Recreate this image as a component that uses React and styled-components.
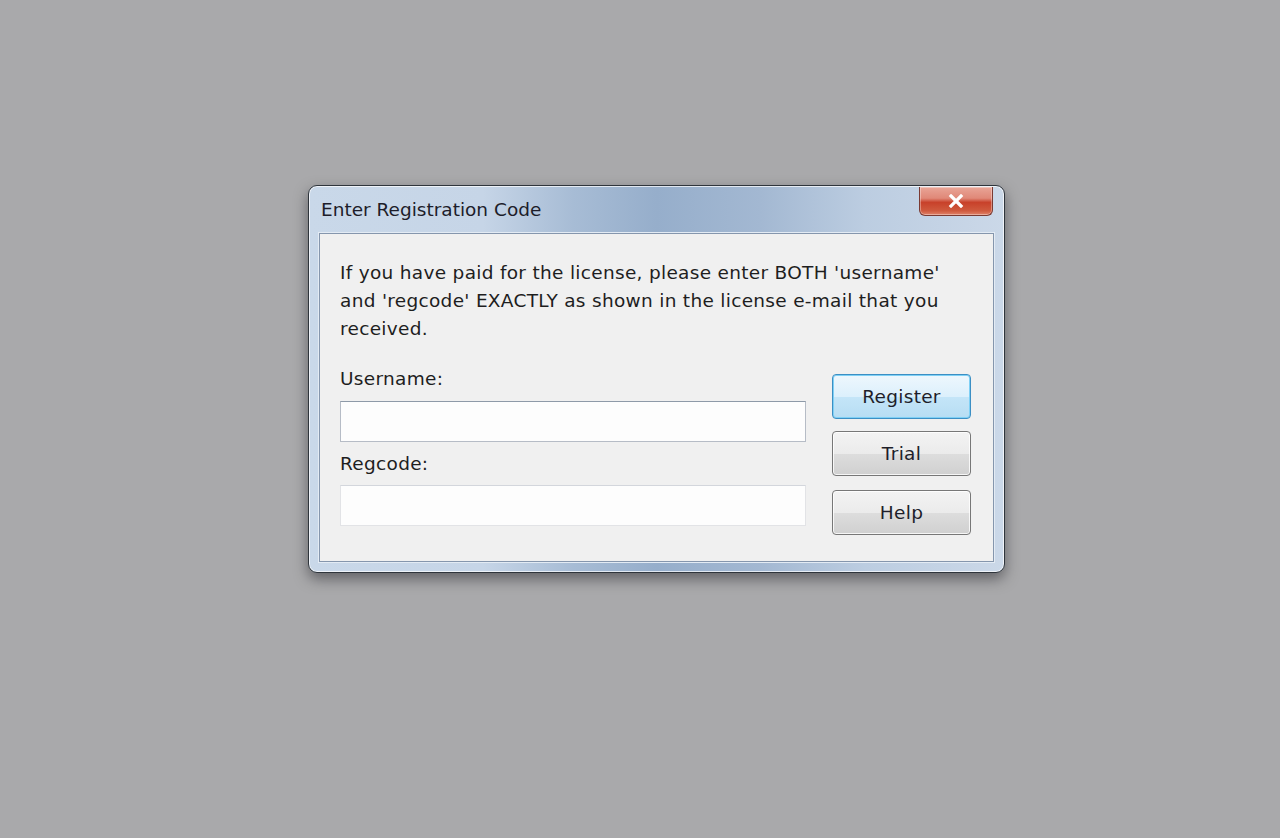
import React from "react";
import styled, { createGlobalStyle } from "styled-components";

const GlobalStyle = createGlobalStyle`
  html, body {
    margin: 0;
    padding: 0;
    background: #a9a9ab;
  }
  body {
    font-family: "DejaVu Sans", "Noto Sans", sans-serif;
  }
`;

const App = () => {
  return (
    <>
      <GlobalStyle />
      <DesktopStyled>
        <WindowStyled>
          <TitleBarStyled>
            <TitleStyled>Enter Registration Code</TitleStyled>
            <CloseStyled aria-label="Close">
              <svg width="16" height="14" viewBox="0 0 16 14">
                <path
                  d="M3 2 L13 12 M13 2 L3 12"
                  stroke="#fff"
                  strokeWidth="3.2"
                  strokeLinecap="square"
                />
              </svg>
            </CloseStyled>
          </TitleBarStyled>
          <ClientStyled>
            <MessageStyled>
              If you have paid for the license, please enter BOTH 'username'
              and 'regcode' EXACTLY as shown in the license e-mail that you
              received.
            </MessageStyled>
            <FormRowStyled>
              <FieldsStyled>
                <LabelStyled>Username:</LabelStyled>
                <InputStyled type="text" />
                <LabelStyled $second>Regcode:</LabelStyled>
                <InputStyled type="text" $light />
              </FieldsStyled>
              <ButtonsStyled>
                <ButtonStyled $default>Register</ButtonStyled>
                <ButtonStyled>Trial</ButtonStyled>
                <ButtonStyled $gap>Help</ButtonStyled>
              </ButtonsStyled>
            </FormRowStyled>
          </ClientStyled>
        </WindowStyled>
      </DesktopStyled>
    </>
  );
};

// Styled components
const DesktopStyled = styled.div`
  width: 1280px;
  height: 838px;
  padding: 185px 0 0 308px;
  box-sizing: border-box;
  overflow: hidden;
`;

const WindowStyled = styled.div`
  width: 697px;
  height: 388px;
  box-sizing: border-box;
  border: 1px solid #2f353c;
  border-radius: 9px;
  padding: 0 10px 10px 10px;
  background: linear-gradient(
    90deg,
    #c9d8e9 0%,
    #c6d5e7 25%,
    #a7bcd5 38%,
    #96aecb 50%,
    #a3b8d2 65%,
    #bccde1 80%,
    #cbd8e8 100%
  );
  box-shadow: 0 6px 14px rgba(40, 40, 45, 0.55),
    inset 0 0 0 1px rgba(255, 255, 255, 0.7);
  display: flex;
  flex-direction: column;
`;

const TitleBarStyled = styled.div`
  height: 47px;
  display: flex;
  align-items: flex-start;
  justify-content: space-between;
  padding-left: 2px;
`;

const TitleStyled = styled.div`
  margin-top: 13px;
  font-size: 18.5px;
  color: #1d1d2a;
`;

const CloseStyled = styled.div`
  width: 74px;
  height: 29px;
  margin-top: 1px;
  margin-right: 1px;
  box-sizing: border-box;
  border: 1px solid #7a3a32;
  border-top: none;
  border-radius: 0 0 6px 6px;
  background: linear-gradient(
    180deg,
    #e9a597 0%,
    #e08878 40%,
    #c8412a 55%,
    #cf5a3e 85%,
    #e0836a 100%
  );
  box-shadow: inset 0 0 0 1px rgba(255, 255, 255, 0.35);
  display: flex;
  align-items: center;
  justify-content: center;
`;

const ClientStyled = styled.div`
  flex: 1;
  background: #f0f0f0;
  border: 1px solid #8596ad;
  box-shadow: 0 0 0 1px #e3ebf4;
  padding: 25px 20px 0 20px;
  color: #1e1e1e;
  font-size: 18.5px;
  letter-spacing: 0.3px;
`;

const MessageStyled = styled.p`
  margin: 0;
  line-height: 28px;
  width: 620px;
`;

const FormRowStyled = styled.div`
  display: flex;
  gap: 26px;
  margin-top: 22px;
`;

const FieldsStyled = styled.div`
  width: 466px;
  display: flex;
  flex-direction: column;
`;

const LabelStyled = styled.div`
  line-height: 28px;
  margin-top: ${(p) => (p.$second ? "8px" : "0")};
  margin-bottom: ${(p) => (p.$second ? "7px" : "8px")};
`;

const InputStyled = styled.input`
  height: 41px;
  box-sizing: border-box;
  background: #fdfdfd;
  border: 1px solid ${(p) => (p.$light ? "#e2e3e6" : "#b6bcc6")};
  border-top-color: ${(p) => (p.$light ? "#d3d6dc" : "#8e9aa8")};
  outline: none;
  padding: 0 6px;
  font-size: 16px;
  font-family: inherit;
`;

const ButtonsStyled = styled.div`
  width: 139px;
  padding-top: 9px;
  display: flex;
  flex-direction: column;
  gap: 12px;
`;

const ButtonStyled = styled.button`
  height: 45px;
  margin-top: ${(p) => (p.$gap ? "2px" : "0")};
  box-sizing: border-box;
  border-radius: 4px;
  font-family: inherit;
  font-size: 18.5px;
  letter-spacing: 0.3px;
  color: #1e1e2a;
  padding: 0;
  border: 1px solid ${(p) => (p.$default ? "#3c8fc4" : "#777777")};
  background: ${(p) =>
    p.$default
      ? "linear-gradient(180deg, #eef7fd 0%, #dcf0fc 50%, #c4e5f8 51%, #b7ddf3 100%)"
      : "linear-gradient(180deg, #f3f3f3 0%, #ebebeb 50%, #dddddd 51%, #d0d0d0 100%)"};
  box-shadow: inset 0 0 0 1px
    ${(p) => (p.$default ? "#7fd0f5" : "rgba(255,255,255,0.8)")};
`;

export default App;
